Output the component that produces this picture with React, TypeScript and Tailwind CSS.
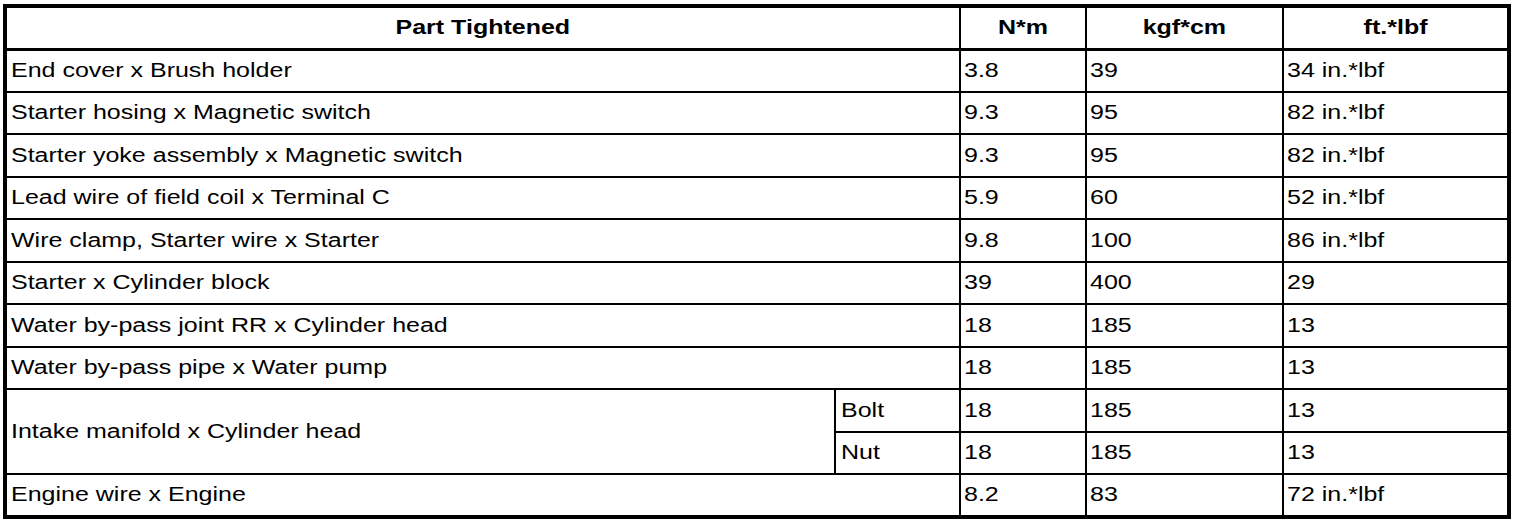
const rows: [string, string, string, string][] = [
  ["End cover x Brush holder", "3.8", "39", "34 in.*lbf"],
  ["Starter hosing x Magnetic switch", "9.3", "95", "82 in.*lbf"],
  ["Starter yoke assembly x Magnetic switch", "9.3", "95", "82 in.*lbf"],
  ["Lead wire of field coil x Terminal C", "5.9", "60", "52 in.*lbf"],
  ["Wire clamp, Starter wire x Starter", "9.8", "100", "86 in.*lbf"],
  ["Starter x Cylinder block", "39", "400", "29"],
  ["Water by-pass joint RR x Cylinder head", "18", "185", "13"],
  ["Water by-pass pipe x Water pump", "18", "185", "13"],
];

const cell = "border-2 border-black pl-[4px] pr-[4px] pt-0 pb-[1px] align-middle";
const num = "border-2 border-black pl-[3px] pr-[4px] pt-0 pb-[1px] align-middle";
const sub = "border-2 border-black pl-[5px] pr-[4px] pt-0 pb-[1px] align-middle";

// the source print uses a wide Helvetica; stretch Arial-metric text to match
function Txt({ children, center }: { children: React.ReactNode; center?: boolean }) {
  return (
    <span
      className={`inline-block whitespace-nowrap scale-x-[1.25] ${center ? "origin-center" : "origin-left"}`}
    >
      {children}
    </span>
  );
}

export default function App() {
  return (
    <div className="min-h-screen bg-white pl-[3px] pt-[4px] font-['Liberation_Sans',Arial,sans-serif] text-[20px] text-black">
      <table className="w-[1504px] table-fixed border-collapse border-4 border-black leading-none">
        <colgroup>
          <col className="w-[830px]" />
          <col className="w-[125px]" />
          <col className="w-[126px]" />
          <col className="w-[197px]" />
          <col className="w-[226px]" />
        </colgroup>
        <thead>
          <tr className="h-[43px]">
            <th colSpan={2} className={`${cell} border-b-[3px] text-center font-bold`}>
              <Txt center>Part Tightened</Txt>
            </th>
            <th className={`${cell} border-b-[3px] text-center font-bold`}>
              <Txt center>N*m</Txt>
            </th>
            <th className={`${cell} border-b-[3px] text-center font-bold`}>
              <Txt center>kgf*cm</Txt>
            </th>
            <th className={`${cell} border-b-[3px] text-center font-bold`}>
              <Txt center>ft.*lbf</Txt>
            </th>
          </tr>
        </thead>
        <tbody>
          {rows.map(([part, nm, kgf, ft]) => (
            <tr key={part} className="h-[42.5px]">
              <td colSpan={2} className={cell}><Txt>{part}</Txt></td>
              <td className={num}><Txt>{nm}</Txt></td>
              <td className={num}><Txt>{kgf}</Txt></td>
              <td className={num}><Txt>{ft}</Txt></td>
            </tr>
          ))}
          <tr className="h-[42.5px]">
            <td rowSpan={2} className={cell}><Txt>Intake manifold x Cylinder head</Txt></td>
            <td className={sub}><Txt>Bolt</Txt></td>
            <td className={num}><Txt>18</Txt></td>
            <td className={num}><Txt>185</Txt></td>
            <td className={num}><Txt>13</Txt></td>
          </tr>
          <tr className="h-[42.5px]">
            <td className={sub}><Txt>Nut</Txt></td>
            <td className={num}><Txt>18</Txt></td>
            <td className={num}><Txt>185</Txt></td>
            <td className={num}><Txt>13</Txt></td>
          </tr>
          <tr className="h-[42.5px]">
            <td colSpan={2} className={cell}><Txt>Engine wire x Engine</Txt></td>
            <td className={num}><Txt>8.2</Txt></td>
            <td className={num}><Txt>83</Txt></td>
            <td className={num}><Txt>72 in.*lbf</Txt></td>
          </tr>
        </tbody>
      </table>
    </div>
  );
}
